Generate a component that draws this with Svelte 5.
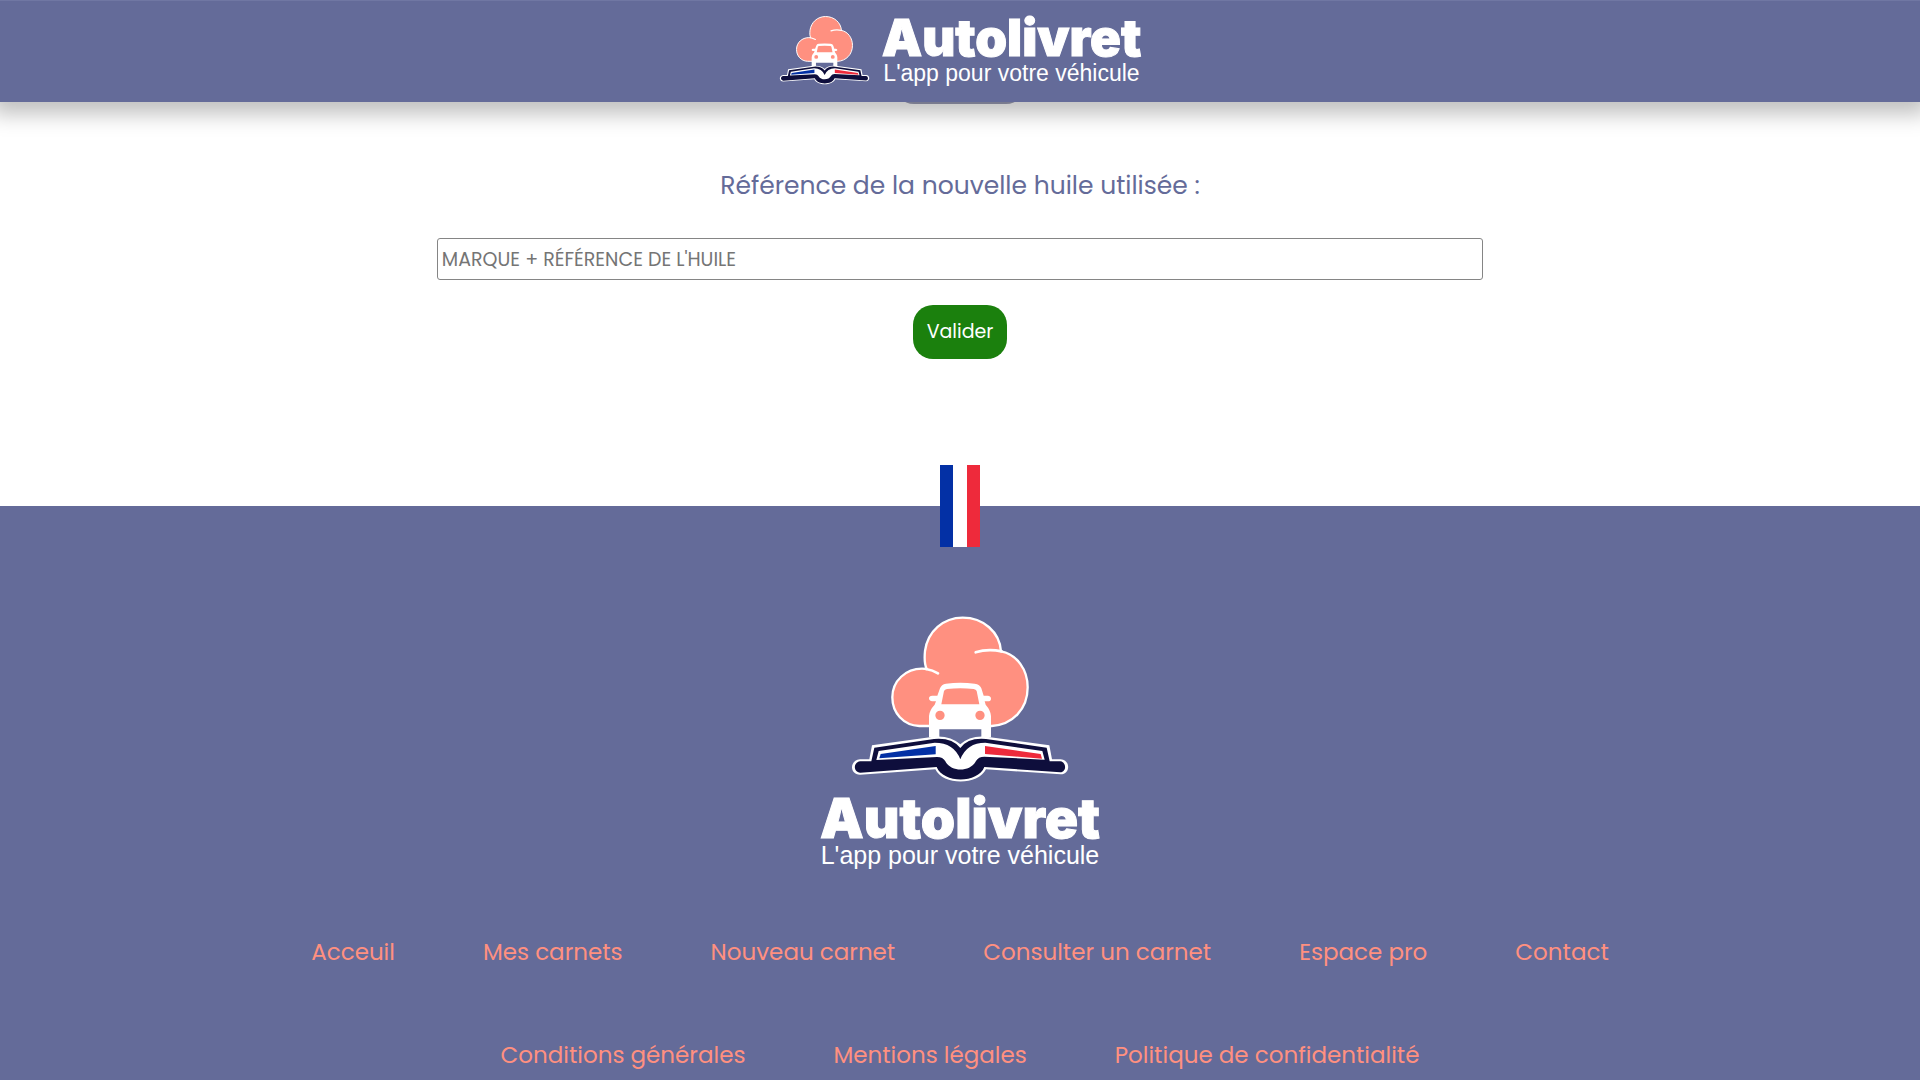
<script>
  const mainLinks = ['Acceuil', 'Mes carnets', 'Nouveau carnet', 'Consulter un carnet', 'Espace pro', 'Contact'];
  const legalLinks = ['Conditions générales', 'Mentions légales', 'Politique de confidentialité'];
  let reference = $state('');
</script>

{#snippet emblem()}
  <svg class="emblem" viewBox="30 40 660 510" aria-hidden="true">
    <path
      d="M262 376H238C190 374 157 337 157 290C157 240 198 204 246 204C251 204 256 204 260 205C252 188 253 171 255 151C263 92 310 51 368 51C430 51 479 94 483 152C531 161 563 207 563 260C563 327 516 373 455 376Z"
      fill="#ff9080" stroke="#fff" stroke-width="7" stroke-linejoin="round" />
    <path d="M258 205Q278 208 294 218M407 155Q443 143 485 152" fill="none" stroke="#fff" stroke-width="8" stroke-linecap="round" />
    <path d="M297 386H424V420H297Z" fill="#646b99" />
    <path
      fill="#fff" fill-rule="evenodd"
      d="M267 410V346Q268 329 284 312L288 302H277Q267 301 267 293T277 285H292L300 263Q304 251 318 249Q361 244 404 249Q420 251 424 263L431 285H443Q453 286 453 294T443 302H434L437 312Q452 329 453 346V410H424V386H298V410ZM304 311H418L410 271Q408 266 401 265Q361 261 321 265Q314 266 312 271ZM300 330A14 14 0 1 0 300 358A14 14 0 1 0 300 330ZM420 330A14 14 0 1 0 420 358A14 14 0 1 0 420 330Z" />
    <path
      d="M96 434L280 408Q330 403 361 431Q390 403 440 408L628 434L636 476H662C692 478 692 520 662 521L438 506C415 555 308 555 286 506L60 522C28 521 28 479 60 476H88Z"
      fill="#fff" />
    <path
      d="M103 441L282 415Q336 410 361 442Q384 410 438 415L620 441L629 482H661C680 484 680 514 661 515L433 499C414 549 310 549 290 499L61 516C39 514 39 484 61 482H94Z"
      fill="#0e0e3c" />
    <path
      d="M116 451L284 426Q342 426 361 476Q380 426 436 426L607 451L614 477L433 468Q415 468 408 481C391 515 333 515 316 482Q309 469 291 469L109 478Z"
      fill="#fff" />
    <path d="M122 460L287 436V461L118 473Z" fill="#0330a5" />
    <path d="M435 436L602 460L606 474L435 460Z" fill="#ee2a3b" />
  </svg>
{/snippet}

{#snippet brand()}
  <span class="brand">
    <span class="name">Autolivret</span>
    <span class="tagline">L'app pour votre véhicule</span>
  </span>
{/snippet}

<div class="page">
  <header>
    <a class="logo" href="/">{@render emblem()}{@render brand()}</a>
  </header>

  <main>
    <button class="previous" type="button" aria-label="Étape précédente"></button>
    <form onsubmit={(e) => e.preventDefault()}>
      <label for="oil">Référence de la nouvelle huile utilisée :</label>
      <input id="oil" type="text" placeholder="MARQUE + RÉFÉRENCE DE L'HUILE" bind:value={reference} />
      <button class="submit" type="submit">Valider</button>
    </form>
  </main>

  <footer>
    <div class="flag"></div>
    <a class="logo stacked" href="/">{@render emblem()}{@render brand()}</a>
    <nav>
      <ul>
        {#each mainLinks as link}<li><a href="/">{link}</a></li>{/each}
      </ul>
      <ul>
        {#each legalLinks as link}<li><a href="/">{link}</a></li>{/each}
      </ul>
    </nav>
  </footer>
</div>

<style>
  :global(body) {
    margin: 0;
    background: #fff;
  }
  .page {
    min-height: 100vh;
    display: flex;
    flex-direction: column;
    font-family: Poppins, Inter, sans-serif;
  }
  header {
    position: sticky;
    top: 0;
    z-index: 2;
    display: flex;
    justify-content: center;
    padding: 14px 0 17px;
    border-top: 1px solid #7077a3;
    background: #646b99;
    box-shadow: 0 4px 20px 8px rgba(0, 0, 0, 0.25);
  }
  .logo {
    display: flex;
    align-items: center;
    gap: 12px;
    color: #fff;
    text-decoration: none;
  }
  .emblem {
    display: block;
    width: 91px;
  }
  .brand {
    display: flex;
    flex-direction: column;
    align-items: center;
    white-space: nowrap;
  }
  .name {
    font: 900 51px/46px Inter, sans-serif;
    -webkit-text-stroke: 1px #fff;
  }
  .tagline {
    font: 23px/24px "Liberation Sans", Arial, sans-serif;
  }
  main {
    display: flex;
    flex-direction: column;
    align-items: center;
  }
  .previous {
    width: 132px;
    height: 54px;
    margin-top: -52px;
    border: 0;
    border-radius: 20px;
    background: #9a9cb5;
  }
  form {
    width: 100%;
    display: flex;
    flex-direction: column;
    align-items: center;
    padding: 64px 0 147px;
  }
  label {
    color: #646b99;
    font-size: 25px;
    line-height: 36px;
  }
  input {
    box-sizing: border-box;
    width: 54.5%;
    height: 42px;
    margin: 34px 0 25px;
    padding: 0 4px;
    border: 1px solid #858585;
    border-radius: 3px;
    font: inherit;
    font-size: 19px;
  }
  input::placeholder {
    color: #757575;
    opacity: 1;
  }
  .submit {
    padding: 12px 14px;
    border: 0;
    border-radius: 20px;
    background: #1b800d;
    color: #fff;
    font: inherit;
    font-size: 19px;
    line-height: 30px;
  }
  footer {
    flex: 1;
    display: flex;
    flex-direction: column;
    align-items: center;
    background: #646b99;
  }
  .flag {
    width: 40px;
    height: 82px;
    margin-top: -41px;
    background: linear-gradient(90deg, #0330a5 33.3%, #fff 33.3% 66.6%, #ee2a3b 66.6%);
  }
  .stacked {
    flex-direction: column;
    gap: 9px;
    margin-top: 67px;
  }
  .stacked .emblem {
    width: 220px;
  }
  .stacked .name {
    font-size: 55px;
    line-height: 50px;
  }
  .stacked .tagline {
    font-size: 25px;
    line-height: 24px;
  }
  nav {
    display: flex;
    flex-direction: column;
    gap: 67px;
    margin-top: 67px;
    padding-bottom: 6px;
  }
  ul {
    display: flex;
    justify-content: center;
    gap: 88px;
    margin: 0;
    padding: 0;
    list-style: none;
  }
  li a {
    color: #ff9080;
    font-size: 23px;
    line-height: 36px;
    text-decoration: none;
    white-space: nowrap;
  }
</style>
